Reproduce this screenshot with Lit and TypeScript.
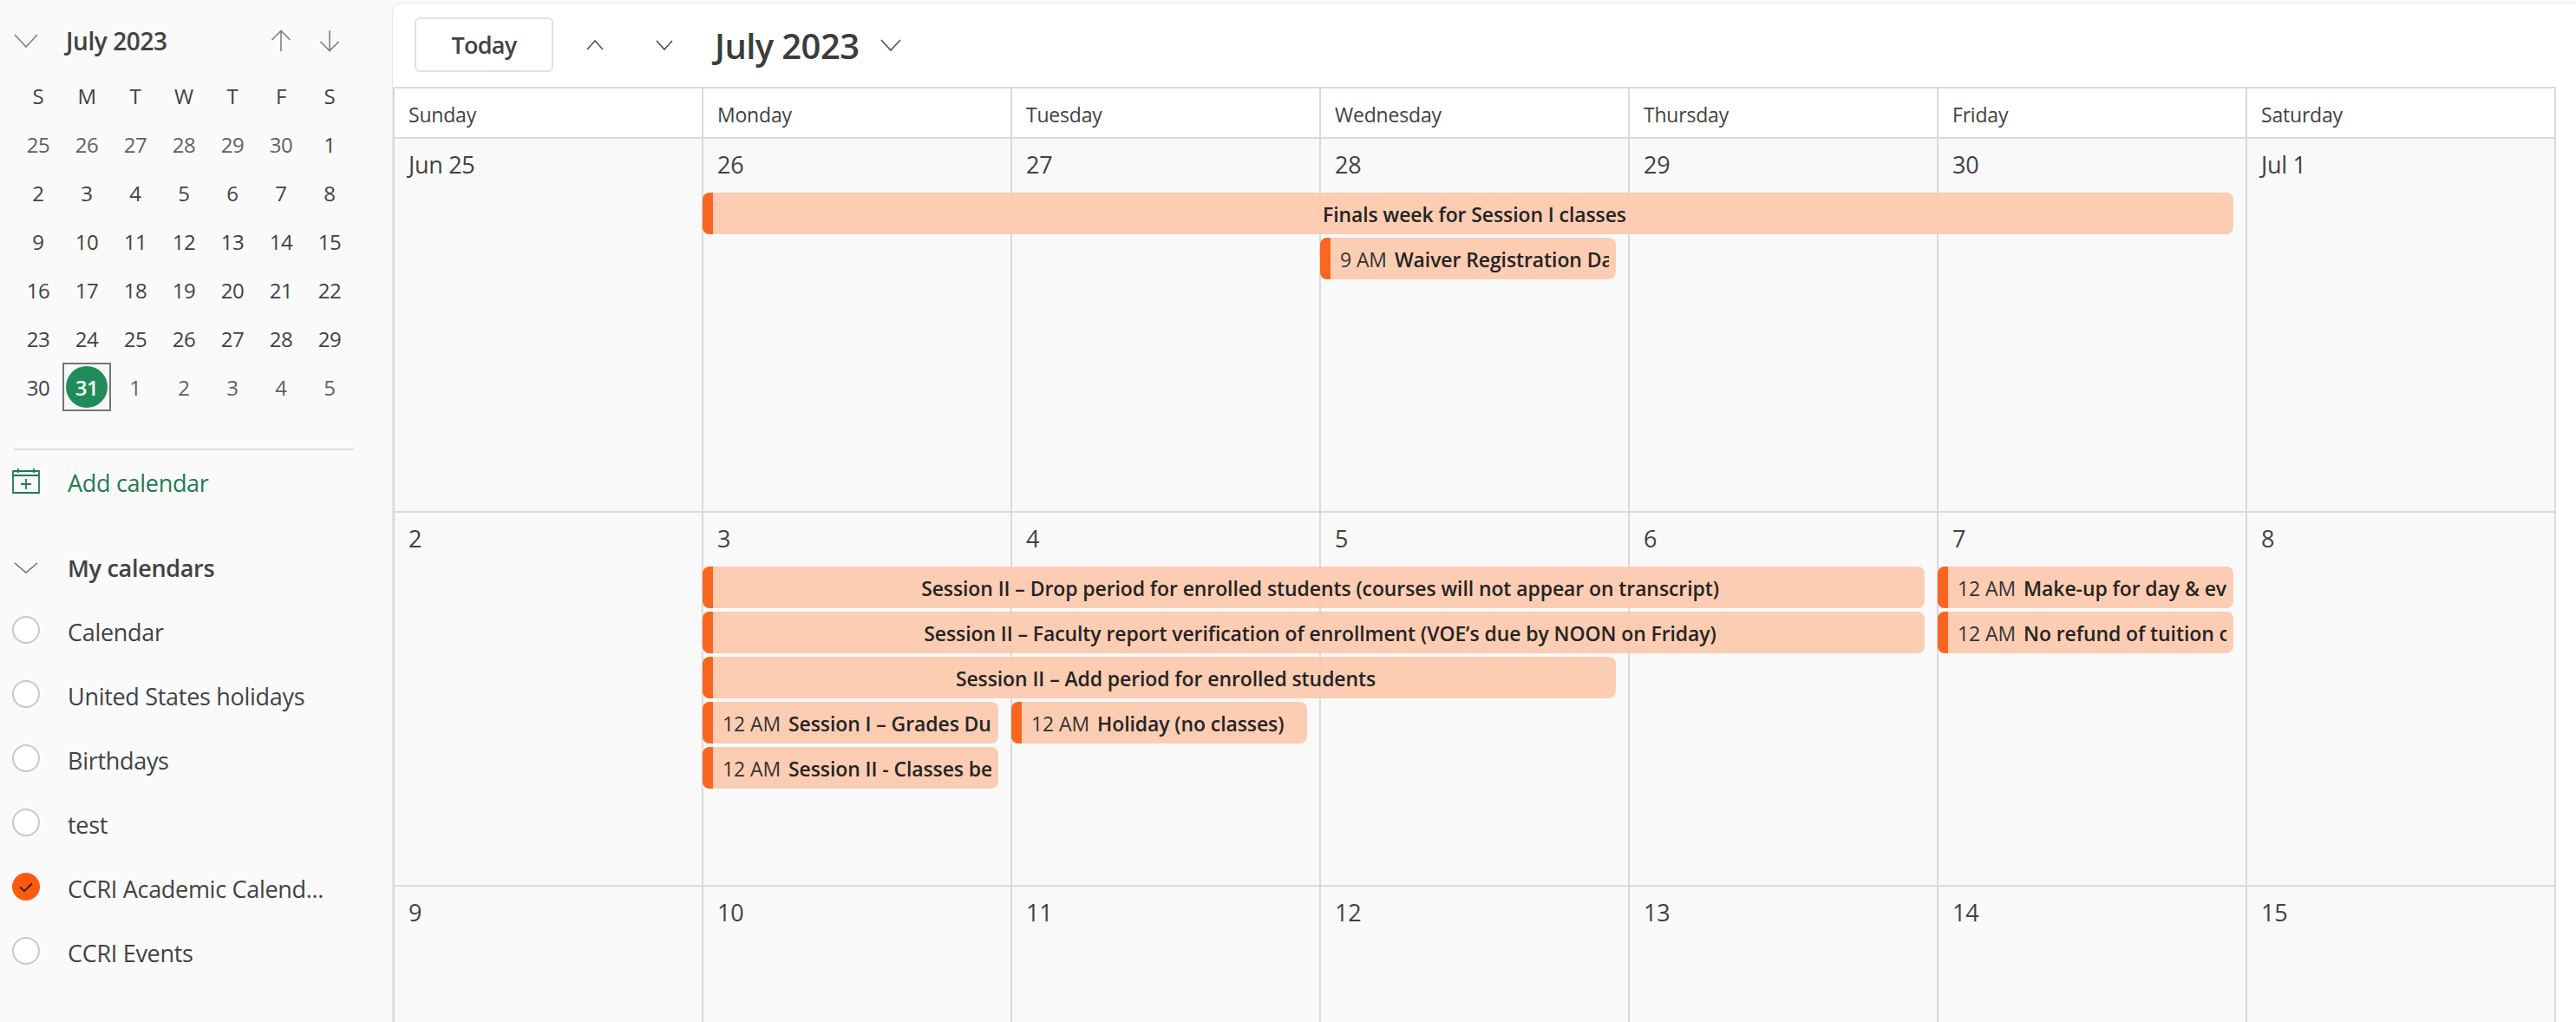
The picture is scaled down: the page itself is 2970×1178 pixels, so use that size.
import { LitElement, html, css, svg } from "lit";
import { customElement } from "lit/decorators.js";

type Ev = { col: number; span: number; row: number; time?: string; title: string; center?: boolean };
type Week = { days: string[]; events: Ev[] };

const WEEKS: Week[] = [
  {
    days: ["Jun 25", "26", "27", "28", "29", "30", "Jul 1"],
    events: [
      { col: 2, span: 5, row: 2, title: "Finals week for Session I classes", center: true },
      { col: 4, span: 1, row: 3, time: "9 AM", title: "Waiver Registration Day" },
    ],
  },
  {
    days: ["2", "3", "4", "5", "6", "7", "8"],
    events: [
      { col: 2, span: 4, row: 2, title: "Session II – Drop period for enrolled students (courses will not appear on transcript)", center: true },
      { col: 2, span: 4, row: 3, title: "Session II – Faculty report verification of enrollment (VOE’s due by NOON on Friday)", center: true },
      { col: 2, span: 3, row: 4, title: "Session II – Add period for enrolled students", center: true },
      { col: 2, span: 1, row: 5, time: "12 AM", title: "Session I – Grades Due" },
      { col: 3, span: 1, row: 5, time: "12 AM", title: "Holiday (no classes)" },
      { col: 2, span: 1, row: 6, time: "12 AM", title: "Session II - Classes begin" },
      { col: 6, span: 1, row: 2, time: "12 AM", title: "Make-up for day & evening classes" },
      { col: 6, span: 1, row: 3, time: "12 AM", title: "No refund of tuition or fees" },
    ],
  },
  { days: ["9", "10", "11", "12", "13", "14", "15"], events: [] },
];

const MINI = [
  ["25", "26", "27", "28", "29", "30", "1"],
  ["2", "3", "4", "5", "6", "7", "8"],
  ["9", "10", "11", "12", "13", "14", "15"],
  ["16", "17", "18", "19", "20", "21", "22"],
  ["23", "24", "25", "26", "27", "28", "29"],
  ["30", "31", "1", "2", "3", "4", "5"],
];

const CALS = [
  { name: "Calendar" },
  { name: "United States holidays" },
  { name: "Birthdays" },
  { name: "test" },
  { name: "CCRI Academic Calend...", on: true },
  { name: "CCRI Events" },
];

const chevDown = (w: number, h: number) => html`<svg width=${w} height=${h} viewBox="0 0 ${w} ${h}" fill="none" stroke="currentColor" stroke-width="1.6"><path d="M1 1 L${w / 2} ${h - 1} L${w - 1} 1"/></svg>`;
const chevUp = (w: number, h: number) => html`<svg width=${w} height=${h} viewBox="0 0 ${w} ${h}" fill="none" stroke="currentColor" stroke-width="1.6"><path d="M1 ${h - 1} L${w / 2} 1 L${w - 1} ${h - 1}"/></svg>`;
const arrowUp = html`<svg width="24" height="26" viewBox="0 0 24 26" fill="none" stroke="currentColor" stroke-width="1.6"><path d="M12 25 V1.5 M1.5 12 L12 1.5 L22.5 12"/></svg>`;
const arrowDown = html`<svg width="24" height="26" viewBox="0 0 24 26" fill="none" stroke="currentColor" stroke-width="1.6"><path d="M12 1 V24.5 M1.5 14 L12 24.5 L22.5 14"/></svg>`;
const addCal = html`<svg width="32" height="30" viewBox="0 0 32 30" fill="none" stroke="currentColor" stroke-width="1.8"><path d="M1 4 H31 V29 H1 Z M7 1 V6 M25 1 V6 M1 9 H31 M16 13 V25 M10 19 H22"/></svg>`;
const check = svg`<path d="M9 16.5 L14 21 L23 12.5" fill="none" stroke="#3b2012" stroke-width="2"/>`;

@customElement("app-root")
export class AppRoot extends LitElement {
  static styles = css`
    :host {
      display: flex;
      height: 1178px;
      overflow: hidden;
      background: #fafafa;
      font-family: "Open Sans", "Noto Sans", sans-serif;
      color: #424242;
    }
    * { box-sizing: border-box; }
    .side { width: 453px; flex: none; padding: 0 0 0 16px; }
    .mini-head { height: 82px; padding-top: 12px; display: flex; align-items: center; color: #808080; }
    .mini-chev { width: 60px; display: flex; }
    .mini-title { width: 220px; font-size: 28px; font-weight: 600; color: #424242; letter-spacing: -0.4px; }
    .mini-arrow { width: 56px; display: flex; justify-content: center; }
    .mini { display: grid; grid-template-columns: repeat(7, 56px); grid-auto-rows: 56px; width: 392px; }
    .mini > div { display: flex; align-items: center; justify-content: center; font-size: 24px; letter-spacing: -0.4px; color: #424242; }
    .mini .other { color: #616161; }
    .mini .today { border: 2px solid #767676; background: #f3f9f7; }
    .mini .today span { width: 48px; height: 48px; flex: none; border-radius: 50%; background: #218c5a; color: #fff; font-weight: 600; display: flex; align-items: center; justify-content: center; }
    .divider { height: 2px; background: #dcdcdc; width: 392px; margin-top: 43px; }
    .add { height: 74px; display: flex; align-items: center; color: #1e7a52; margin-left: -2px; }
    .add svg { flex: none; margin-right: 33px; margin-top: -4px; }
    .add span { font-size: 27px; letter-spacing: -0.3px; margin-left: -1px; }
    .group { display: flex; align-items: center; height: 74px; margin-top: 24px; font-size: 27px; font-weight: 600; letter-spacing: -0.3px; color: #424242; }
    .group .g { width: 62px; flex: none; display: flex; color: #707070; }
    .cal { display: flex; align-items: center; height: 74px; font-size: 27px; letter-spacing: -0.3px; margin-left: -2px; white-space: nowrap; }
    .dot { width: 32px; height: 32px; border-radius: 50%; border: 2px solid #c8c8c8; background: #fff; margin-right: 32px; flex: none; margin-top: -4px; }
    .dot.on { border: none; background: #fb5a10; }
    .dot svg { display: block; }

    .main { flex: 1; min-width: 0; margin-top: 4px; background: #fff; border-top-left-radius: 10px; box-shadow: -1px 0 1px #e6e6e6, 0 -1px 1px #e8e8e8; }
    .bar { height: 96px; display: flex; align-items: center; padding-left: 25px; color: #424242; }
    .today-btn { width: 160px; height: 63px; margin-top: -2px; border: 2px solid #e1e1e1; border-radius: 6px; background: #fff; display: flex; align-items: center; justify-content: center; font-size: 27px; font-weight: 600; letter-spacing: -0.7px; color: #424242; }
    .nav { width: 80px; display: flex; justify-content: center; color: #505050; }
    .nav.first { margin-left: 8px; }
    .title { margin-left: 18px; font-size: 40px; font-weight: 600; letter-spacing: -0.6px; color: #3c3c3c; }
    .title-chev { margin-left: 25px; display: flex; color: #505050; }
    .cal-grid { width: 2494px; }
    .heads { display: grid; grid-template-columns: repeat(7, 1fr); height: 58px; border-top: 2px solid #dadada; border-right: 2px solid #dadada; }
    .heads > div { border-left: 2px solid #dadada; padding: 4px 0 0 16px; display: flex; align-items: center; font-size: 23px; letter-spacing: -0.2px; color: #424242; }
    .week { height: 431px; display: grid; grid-template-columns: repeat(7, 1fr); grid-template-rows: 58px repeat(5, 48px) 1fr; row-gap: 4px; border-top: 2px solid #dadada; border-right: 2px solid #dadada; background: #f9f9f9; }
    .day { grid-row: 1 / -1; border-left: 2px solid #dadada; padding: 12px 0 0 16px; font-size: 27px; line-height: 36px; letter-spacing: -0.3px; color: #424242; min-width: 0; }
    .ev { margin: 0 14px 0 1px; min-width: 0; height: 48px; display: flex; align-items: center; background: rgba(253, 201, 172, 0.92); border-radius: 8px; border-left: 12px solid #f9661f; padding: 2px 8px 0 11px; white-space: nowrap; font-size: 23px; letter-spacing: -0.1px; color: #242424; }
    .clip { display: flex; flex: 1; min-width: 0; overflow: hidden; }
    .ev.center .clip { justify-content: center; }
    .ev .t { margin-right: 9px; color: #333; flex: none; }
    .ev .n { font-weight: 550; flex: none; }
  `;

  private evStyle(e: Ev) {
    return `grid-column:${e.col} / span ${e.span};grid-row:${e.row}`;
  }

  render() {
    return html`
      <aside class="side">
        <div class="mini-head">
          <span class="mini-chev">${chevDown(28, 16)}</span>
          <span class="mini-title">July 2023</span>
          <span class="mini-arrow">${arrowUp}</span>
          <span class="mini-arrow">${arrowDown}</span>
        </div>
        <div class="mini">
          ${["S", "M", "T", "W", "T", "F", "S"].map((d) => html`<div>${d}</div>`)}
          ${MINI.flatMap((r, ri) =>
            r.map((d, i) => {
              const other = (ri === 0 && i < 6) || (ri === 5 && i > 1);
              if (ri === 5 && i === 1) return html`<div class="today"><span>${d}</span></div>`;
              return html`<div class=${other ? "other" : ""}>${d}</div>`;
            })
          )}
        </div>
        <div class="divider"></div>
        <div class="add">${addCal}<span>Add calendar</span></div>
        <div class="group"><span class="g">${chevDown(28, 13)}</span>My calendars</div>
        ${CALS.map(
          (c) => html`<div class="cal"><span class="dot ${c.on ? "on" : ""}">${c.on ? html`<svg width="32" height="32" viewBox="0 0 32 32">${check}</svg>` : ""}</span>${c.name}</div>`
        )}
      </aside>
      <main class="main">
        <div class="bar">
          <div class="today-btn">Today</div>
          <span class="nav first">${chevUp(20, 12)}</span>
          <span class="nav">${chevDown(20, 12)}</span>
          <span class="title">July 2023</span>
          <span class="title-chev">${chevDown(24, 14)}</span>
        </div>
        <div class="cal-grid">
          <div class="heads">
            ${["Sunday", "Monday", "Tuesday", "Wednesday", "Thursday", "Friday", "Saturday"].map((d) => html`<div>${d}</div>`)}
          </div>
          ${WEEKS.map(
            (w) => html`<div class="week">
              ${w.days.map((d, i) => html`<div class="day" style="grid-column:${i + 1}">${d}</div>`)}
              ${w.events.map(
                (e) => html`<div class="ev ${e.center ? "center" : ""}" style=${this.evStyle(e)}>
                  <div class="clip">${e.time ? html`<span class="t">${e.time}</span>` : ""}<span class="n">${e.title}</span></div>
                </div>`
              )}
            </div>`
          )}
        </div>
      </main>
    `;
  }
}
